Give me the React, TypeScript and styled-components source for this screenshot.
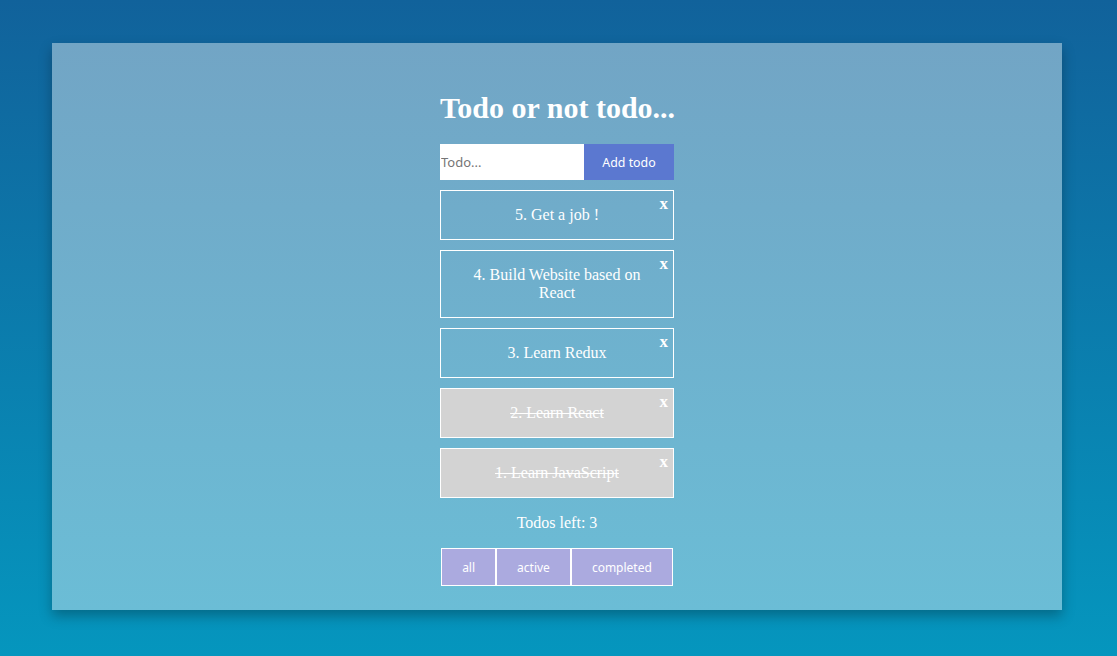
import React, { useState } from "react";
import styled, { createGlobalStyle } from "styled-components";

const Global = createGlobalStyle`
  html, body { margin: 0; padding: 0; }
  body {
    min-height: 656px;
    background: linear-gradient(to bottom, #11629b 0%, #0596be 100%);
    font-family: "Liberation Serif", "Times New Roman", serif;
  }
`;

const Page = styled.div`
  padding: 43px 55px 46px 52px;
  box-sizing: border-box;
  height: 656px;
`;

const Panel = styled.main`
  height: 567px;
  background: linear-gradient(to bottom, #72a5c5 0%, #6bbdd6 100%);
  box-shadow: 0 6px 12px rgba(0, 0, 0, 0.28);
  display: flex;
  justify-content: center;
`;

const Column = styled.div`
  width: 234px;
  display: flex;
  flex-direction: column;
  align-items: stretch;
`;

const Title = styled.h1`
  margin: 47px 0 19px;
  font-size: 30px;
  line-height: 35px;
  font-weight: bold;
  color: #fff;
  text-align: center;
  white-space: nowrap;
`;

const Form = styled.form`
  display: flex;
  height: 36px;
  margin: 0 0 10px;
`;

const Input = styled.input`
  width: 143px;
  border: none;
  outline: none;
  padding: 0 0 0 1px;
  margin: 0;
  font-family: "Noto Sans", "Open Sans", sans-serif;
  font-size: 13px;
  color: #333;
  background: #fff;
  &::placeholder { color: #757575; }
`;

const AddButton = styled.button`
  flex: 1;
  border: none;
  margin: 0;
  background: #5b78d0;
  color: #fff;
  font-family: "Noto Sans", "Open Sans", sans-serif;
  font-size: 12.4px;
  cursor: pointer;
`;

const List = styled.ul`
  list-style: none;
  margin: 0;
  padding: 0;
  display: flex;
  flex-direction: column;
  gap: 10px;
`;

const Item = styled.li<{ $done: boolean }>`
  position: relative;
  border: 1px solid #fff;
  padding: 15px 26px;
  background: ${(p) => (p.$done ? "#d3d3d3" : "transparent")};
  color: #fff;
  font-size: 16px;
  line-height: 18px;
  text-align: center;
  text-decoration: ${(p) => (p.$done ? "line-through" : "none")};
  cursor: pointer;
`;

const Remove = styled.span`
  position: absolute;
  top: 4px;
  right: 5px;
  font-weight: bold;
  font-size: 17px;
  line-height: 18px;
  color: #fff;
  text-decoration: none;
`;

const Left = styled.p`
  margin: 16px 0 16px;
  color: #fff;
  font-size: 16px;
  line-height: 18px;
  text-align: center;
`;

const Filters = styled.div`
  display: flex;
  justify-content: center;
`;

const FilterButton = styled.button`
  height: 38px;
  margin: 0;
  padding: 0 20px;
  border: 1px solid #fff;
  background: #abaadf;
  color: #fff;
  font-family: "Noto Sans", "Open Sans", sans-serif;
  font-size: 12px;
  cursor: pointer;
`;

const initial = [
  { id: 5, text: "5. Get a job !", done: false },
  { id: 4, text: "4. Build Website based on React", done: false },
  { id: 3, text: "3. Learn Redux", done: false },
  { id: 2, text: "2. Learn React", done: true },
  { id: 1, text: "1. Learn JavaScript", done: true },
];

export default function App() {
  const [todos] = useState(initial);
  const left = todos.filter((t) => !t.done).length;
  return (
    <>
      <Global />
      <Page>
        <Panel>
          <Column>
            <Title>Todo or not todo...</Title>
            <Form onSubmit={(e) => e.preventDefault()}>
              <Input placeholder="Todo..." />
              <AddButton type="submit">Add todo</AddButton>
            </Form>
            <List>
              {todos.map((t) => (
                <Item key={t.id} $done={t.done}>
                  {t.text}
                  <Remove>x</Remove>
                </Item>
              ))}
            </List>
            <Left>Todos left: {left}</Left>
            <Filters>
              <FilterButton>all</FilterButton>
              <FilterButton>active</FilterButton>
              <FilterButton>completed</FilterButton>
            </Filters>
          </Column>
        </Panel>
      </Page>
    </>
  );
}
